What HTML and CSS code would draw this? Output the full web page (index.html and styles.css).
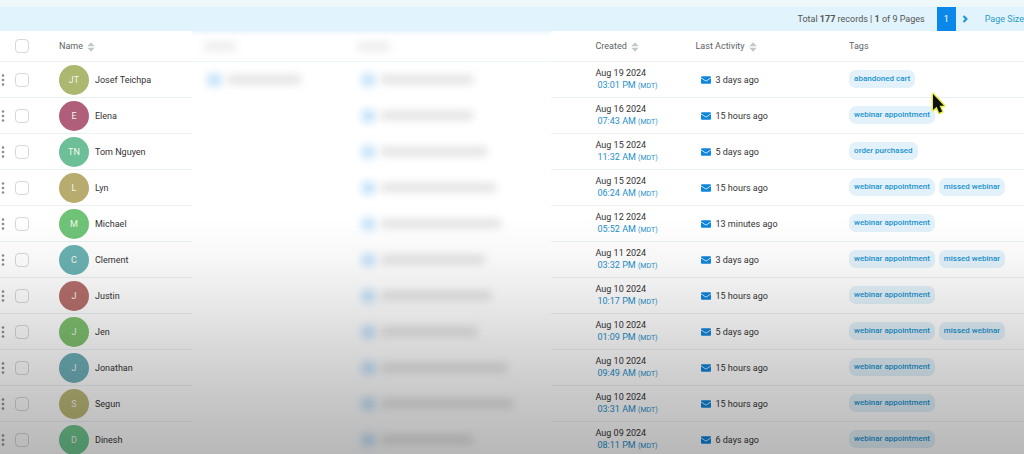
FILE: index.html
```
<!DOCTYPE html>
<html lang="en">
<head>
    <meta charset="UTF-8">
    <meta name="viewport" content="width=device-width, initial-scale=1.0">
    <title>Contacts</title>
    <link rel="stylesheet" href="styles.css">
</head>
<body>
    <svg class="sprite" aria-hidden="true">
        <symbol id="sort" viewBox="0 0 8 10">
            <path d="M4 0.3L7.7 4.3H0.3zM4 9.7L0.3 5.7H7.7z"/>
        </symbol>
        <symbol id="mail" viewBox="0 0 10 8">
            <path d="M0.9 0.3h8.2a0.9 0.9 0 0 1 0.9 0.9v0.3L5 4.8 0 1.5V1.2a0.9 0.9 0 0 1 0.9-0.9z"/>
            <path d="M0 2.3l5 3.3 5-3.3V6.8a0.9 0.9 0 0 1-0.9 0.9H0.9A0.9 0.9 0 0 1 0 6.8z"/>
        </symbol>
        <symbol id="dots" viewBox="0 0 4 12">
            <circle cx="2" cy="1.5" r="1.3"/>
            <circle cx="2" cy="6" r="1.3"/>
            <circle cx="2" cy="10.5" r="1.3"/>
        </symbol>
    </svg>

    <div class="top-strip"></div>
    <nav class="pager">
        <span class="pager-total">Total <b>177</b> records | <b>1</b> of 9 Pages</span>
        <button class="pager-page" type="button">1</button>
        <button class="pager-next" type="button" aria-label="Next page">
            <svg viewBox="0 0 6 8"><path d="M1.5 1L4.5 4 1.5 7"/></svg>
        </button>
        <a class="pager-size" href="#">Page Size</a>
    </nav>

    <table class="contacts">
        <colgroup>
            <col class="col-menu">
            <col class="col-check">
            <col class="col-name">
            <col class="col-phone">
            <col class="col-email">
            <col class="col-created">
            <col class="col-activity">
            <col>
        </colgroup>
        <thead>
            <tr>
                <th></th>
                <th><input type="checkbox" aria-label="Select all"></th>
                <th>Name <svg class="sort"><use href="#sort"/></svg></th>
                <th class="hidden-cell"><span class="smudge smudge-head"></span></th>
                <th class="hidden-cell"><span class="smudge smudge-head"></span></th>
                <th class="created">Created <svg class="sort"><use href="#sort"/></svg></th>
                <th>Last Activity <svg class="sort"><use href="#sort"/></svg></th>
                <th>Tags</th>
            </tr>
        </thead>
        <tbody>
            <tr>
                <td><button class="menu" type="button" aria-label="Menu"><svg><use href="#dots"/></svg></button></td>
                <td><input type="checkbox" aria-label="Josef Teichpa"></td>
                <td><div class="person"><span class="avatar" style="background: #acb770">JT</span>Josef Teichpa</div></td>
                <td class="hidden-cell"><div class="smudges"><span class="smudge smudge-icon"></span><span class="smudge" style="width: 74px"></span></div></td>
                <td class="hidden-cell"><div class="smudges email"><span class="smudge smudge-icon"></span><span class="smudge" style="width: 92px"></span></div></td>
                <td class="created">Aug 19 2024<span class="time">03:01 PM <small>(MDT)</small></span></td>
                <td><div class="activity"><svg><use href="#mail"/></svg>3 days ago</div></td>
                <td><div class="tags"><span class="tag">abandoned cart</span></div></td>
            </tr>
            <tr>
                <td><button class="menu" type="button" aria-label="Menu"><svg><use href="#dots"/></svg></button></td>
                <td><input type="checkbox" aria-label="Elena"></td>
                <td><div class="person"><span class="avatar" style="background: #b05f7b">E</span>Elena</div></td>
                <td class="hidden-cell"></td>
                <td class="hidden-cell"><div class="smudges email"><span class="smudge smudge-icon"></span><span class="smudge" style="width: 92px"></span></div></td>
                <td class="created">Aug 16 2024<span class="time">07:43 AM <small>(MDT)</small></span></td>
                <td><div class="activity"><svg><use href="#mail"/></svg>15 hours ago</div></td>
                <td><div class="tags"><span class="tag">webinar appointment</span></div></td>
            </tr>
            <tr>
                <td><button class="menu" type="button" aria-label="Menu"><svg><use href="#dots"/></svg></button></td>
                <td><input type="checkbox" aria-label="Tom Nguyen"></td>
                <td><div class="person"><span class="avatar" style="background: #6dbf97">TN</span>Tom Nguyen</div></td>
                <td class="hidden-cell"></td>
                <td class="hidden-cell"><div class="smudges email"><span class="smudge smudge-icon"></span><span class="smudge" style="width: 106px"></span></div></td>
                <td class="created">Aug 15 2024<span class="time">11:32 AM <small>(MDT)</small></span></td>
                <td><div class="activity"><svg><use href="#mail"/></svg>5 days ago</div></td>
                <td><div class="tags"><span class="tag">order purchased</span></div></td>
            </tr>
            <tr>
                <td><button class="menu" type="button" aria-label="Menu"><svg><use href="#dots"/></svg></button></td>
                <td><input type="checkbox" aria-label="Lyn"></td>
                <td><div class="person"><span class="avatar" style="background: #b7ab6d">L</span>Lyn</div></td>
                <td class="hidden-cell"></td>
                <td class="hidden-cell"><div class="smudges email"><span class="smudge smudge-icon"></span><span class="smudge" style="width: 115px"></span></div></td>
                <td class="created">Aug 15 2024<span class="time">06:24 AM <small>(MDT)</small></span></td>
                <td><div class="activity"><svg><use href="#mail"/></svg>15 hours ago</div></td>
                <td><div class="tags"><span class="tag">webinar appointment</span><span class="tag">missed webinar</span></div></td>
            </tr>
            <tr>
                <td><button class="menu" type="button" aria-label="Menu"><svg><use href="#dots"/></svg></button></td>
                <td><input type="checkbox" aria-label="Michael"></td>
                <td><div class="person"><span class="avatar" style="background: #6fc377">M</span>Michael</div></td>
                <td class="hidden-cell"></td>
                <td class="hidden-cell"><div class="smudges email"><span class="smudge smudge-icon"></span><span class="smudge" style="width: 120px"></span></div></td>
                <td class="created">Aug 12 2024<span class="time">05:52 AM <small>(MDT)</small></span></td>
                <td><div class="activity"><svg><use href="#mail"/></svg>13 minutes ago</div></td>
                <td><div class="tags"><span class="tag">webinar appointment</span></div></td>
            </tr>
            <tr>
                <td><button class="menu" type="button" aria-label="Menu"><svg><use href="#dots"/></svg></button></td>
                <td><input type="checkbox" aria-label="Clement"></td>
                <td><div class="person"><span class="avatar" style="background: #6bb2b3">C</span>Clement</div></td>
                <td class="hidden-cell"></td>
                <td class="hidden-cell"><div class="smudges email"><span class="smudge smudge-icon"></span><span class="smudge" style="width: 104px"></span></div></td>
                <td class="created">Aug 11 2024<span class="time">03:32 PM <small>(MDT)</small></span></td>
                <td><div class="activity"><svg><use href="#mail"/></svg>3 days ago</div></td>
                <td><div class="tags"><span class="tag">webinar appointment</span><span class="tag">missed webinar</span></div></td>
            </tr>
            <tr>
                <td><button class="menu" type="button" aria-label="Menu"><svg><use href="#dots"/></svg></button></td>
                <td><input type="checkbox" aria-label="Justin"></td>
                <td><div class="person"><span class="avatar" style="background: #b66f6b">J</span>Justin</div></td>
                <td class="hidden-cell"></td>
                <td class="hidden-cell"><div class="smudges email"><span class="smudge smudge-icon"></span><span class="smudge" style="width: 110px"></span></div></td>
                <td class="created">Aug 10 2024<span class="time">10:17 PM <small>(MDT)</small></span></td>
                <td><div class="activity"><svg><use href="#mail"/></svg>15 hours ago</div></td>
                <td><div class="tags"><span class="tag">webinar appointment</span></div></td>
            </tr>
            <tr>
                <td><button class="menu" type="button" aria-label="Menu"><svg><use href="#dots"/></svg></button></td>
                <td><input type="checkbox" aria-label="Jen"></td>
                <td><div class="person"><span class="avatar" style="background: #7fc070">J</span>Jen</div></td>
                <td class="hidden-cell"></td>
                <td class="hidden-cell"><div class="smudges email"><span class="smudge smudge-icon"></span><span class="smudge" style="width: 96px"></span></div></td>
                <td class="created">Aug 10 2024<span class="time">01:09 PM <small>(MDT)</small></span></td>
                <td><div class="activity"><svg><use href="#mail"/></svg>5 days ago</div></td>
                <td><div class="tags"><span class="tag">webinar appointment</span><span class="tag">missed webinar</span></div></td>
            </tr>
            <tr>
                <td><button class="menu" type="button" aria-label="Menu"><svg><use href="#dots"/></svg></button></td>
                <td><input type="checkbox" aria-label="Jonathan"></td>
                <td><div class="person"><span class="avatar" style="background: #6fb0b9">J</span>Jonathan</div></td>
                <td class="hidden-cell"></td>
                <td class="hidden-cell"><div class="smudges email"><span class="smudge smudge-icon"></span><span class="smudge" style="width: 126px"></span></div></td>
                <td class="created">Aug 10 2024<span class="time">09:49 AM <small>(MDT)</small></span></td>
                <td><div class="activity"><svg><use href="#mail"/></svg>15 hours ago</div></td>
                <td><div class="tags"><span class="tag">webinar appointment</span></div></td>
            </tr>
            <tr>
                <td><button class="menu" type="button" aria-label="Menu"><svg><use href="#dots"/></svg></button></td>
                <td><input type="checkbox" aria-label="Segun"></td>
                <td><div class="person"><span class="avatar" style="background: #bcba78">S</span>Segun</div></td>
                <td class="hidden-cell"></td>
                <td class="hidden-cell"><div class="smudges email"><span class="smudge smudge-icon"></span><span class="smudge" style="width: 132px"></span></div></td>
                <td class="created">Aug 10 2024<span class="time">03:31 AM <small>(MDT)</small></span></td>
                <td><div class="activity"><svg><use href="#mail"/></svg>15 hours ago</div></td>
                <td><div class="tags"><span class="tag">webinar appointment</span></div></td>
            </tr>
            <tr>
                <td><button class="menu" type="button" aria-label="Menu"><svg><use href="#dots"/></svg></button></td>
                <td><input type="checkbox" aria-label="Dinesh"></td>
                <td><div class="person"><span class="avatar" style="background: #70c790">D</span>Dinesh</div></td>
                <td class="hidden-cell"></td>
                <td class="hidden-cell"><div class="smudges email"><span class="smudge smudge-icon"></span><span class="smudge" style="width: 92px"></span></div></td>
                <td class="created">Aug 09 2024<span class="time">08:11 PM <small>(MDT)</small></span></td>
                <td><div class="activity"><svg><use href="#mail"/></svg>6 days ago</div></td>
                <td><div class="tags"><span class="tag">webinar appointment</span></div></td>
            </tr>
        </tbody>
    </table>

    <div class="shade"></div>
    <svg class="cursor" viewBox="0 0 16 26" aria-hidden="true">
        <path d="M3 3v16l3.6-3.2 2.6 6 3-1.3-2.6-5.8H14z"/>
    </svg>
</body>
</html>
```
FILE: styles.css
```
* {
    box-sizing: border-box;
}

body {
    margin: 0;
    height: 100vh;
    overflow: hidden;
    background-color: #fff;
    font-family: Roboto, sans-serif;
    font-size: 9px;
    line-height: 12px;
    color: #333;
}

button {
    padding: 0;
    border: none;
    background: none;
    font: inherit;
    cursor: pointer;
}

.sprite {
    display: none;
}

.top-strip {
    height: 7px;
    background-color: #eef8fa;
}

/* pager */
.pager {
    display: flex;
    align-items: center;
    justify-content: flex-end;
    height: 24px;
    background-color: #e1f3fc;
    color: #555;
}

.pager-total {
    margin-right: 12px;
}

.pager-page {
    width: 19px;
    height: 24px;
    background-color: #0a88ea;
    color: #fff;
}

.pager-next {
    display: flex;
    margin: 0 17px 0 6px;
}

.pager-next svg {
    width: 6px;
    height: 8px;
    fill: none;
    stroke: #1593d2;
    stroke-width: 2;
}

.pager-size {
    white-space: nowrap;
    color: #2b9cc9;
    text-decoration: none;
}

/* table */
.contacts {
    width: 100%;
    table-layout: fixed;
    border-collapse: separate;
    border-spacing: 0;
}

.col-menu { width: 10px; }
.col-check { width: 49px; }
.col-name { width: 13%; }
.col-phone { width: 15%; }
.col-email { width: 20%; }
.col-created { width: 145px; }
.col-activity { width: 15%; }

th,
td {
    padding: 0;
    border-bottom: 1px solid #eaf1f2;
    text-align: left;
    vertical-align: middle;
    white-space: nowrap;
}

th {
    height: 31px;
    font-weight: normal;
    color: #5c6464;
}

td {
    height: 36px;
}

.sort {
    width: 8px;
    height: 10px;
    margin-left: 2px;
    vertical-align: middle;
    fill: #c3c7c7;
}

input[type="checkbox"] {
    appearance: none;
    display: block;
    width: 14px;
    height: 14px;
    margin: 0 0 0 5px;
    border: 1px solid #d3d9d9;
    border-radius: 4px;
}

.menu {
    display: block;
    margin-left: 1px;
}

.menu svg {
    display: block;
    width: 4px;
    height: 12px;
    fill: #8a8f8f;
}

.person {
    display: flex;
    align-items: center;
    gap: 6px;
}

.avatar {
    display: flex;
    align-items: center;
    justify-content: center;
    width: 30px;
    height: 30px;
    border-radius: 50%;
    color: #f3f6f0;
}

.created {
    padding-left: 45px;
}

.time {
    display: block;
    padding-left: 2px;
    color: #1e8fcb;
}

.time small {
    font-size: 7px;
}

.activity {
    display: flex;
    align-items: center;
    gap: 5px;
    padding-left: 5px;
}

.activity svg {
    width: 10px;
    height: 8px;
    fill: #0f86dd;
}

.tags {
    display: flex;
    gap: 4px;
    padding-bottom: 2px;
}

.tag {
    padding: 3px 5px;
    border-radius: 7px;
    background-color: #e2f1fa;
    font-size: 8px;
    font-weight: 500;
    color: #1b93d0;
}

/* private columns */
.hidden-cell {
    border-bottom-color: transparent;
}

th.hidden-cell {
    padding-left: 12px;
    background: linear-gradient(#e9f6fc, #fff 5px);
}

.smudges {
    display: flex;
    align-items: center;
    gap: 6px;
    padding-left: 16px;
}

.smudge {
    display: block;
    height: 9px;
    background-color: #e2e2e2;
    filter: blur(4px);
}

.smudge-head {
    width: 32px;
    background-color: #ececec;
}

.smudge-icon {
    width: 13px;
    height: 12px;
    background-color: #bfe0fa;
}

/* fade over the lower half */
.shade {
    position: fixed;
    inset: 0;
    pointer-events: none;
    background: linear-gradient(rgba(0,0,0,0) 48%, rgba(0,0,0,0.03) 57%, rgba(0,0,0,0.08) 65%, rgba(0,0,0,0.15) 76%, rgba(0,0,0,0.22) 88%, rgba(0,0,0,0.28));
}

.cursor {
    position: absolute;
    left: 930px;
    top: 91px;
    width: 16px;
    height: 26px;
    fill: #111;
    stroke: #e6ee4a;
    stroke-width: 3;
    paint-order: stroke;
    stroke-linejoin: round;
}
```
